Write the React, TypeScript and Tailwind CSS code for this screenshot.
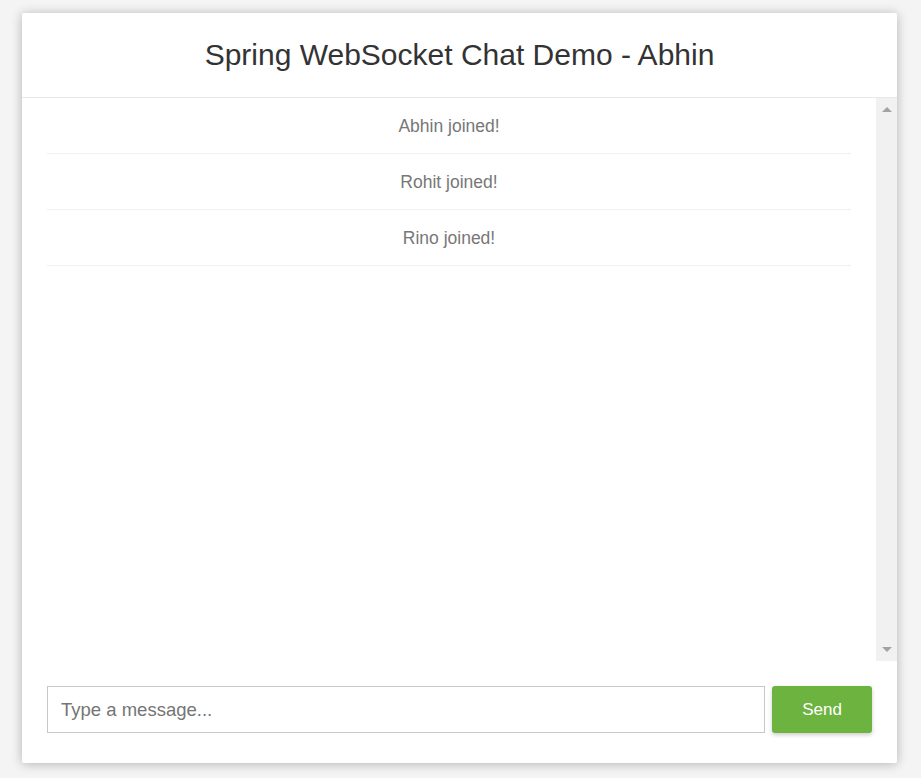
import React from "react";

export default function App() {
  const msgs = ["Abhin joined!", "Rohit joined!", "Rino joined!"];
  return (
    <div className="min-h-[778px] w-full bg-[#f4f4f4] pt-[13px] pl-[22px]" style={{ fontFamily: '"Liberation Sans", Arial, sans-serif' }}>
      <div className="w-[875px] h-[750px] bg-white rounded-[2px] shadow-[0_1px_11px_rgba(0,0,0,0.27)] flex flex-col">
        <div className="h-[85px] border-b border-[#e8e8e8] flex items-center justify-center">
          <h2 className="text-[30px] text-[#333] leading-none">Spring WebSocket Chat Demo - Abhin</h2>
        </div>
        <div className="h-[563px] flex">
          <ul className="flex-1 px-[25px]">
            {msgs.map((m) => (
              <li key={m} className="h-[56px] pt-[2px] border-b border-[#f0f0f0] flex items-center justify-center text-[17.5px] text-[#777]">
                {m}
              </li>
            ))}
          </ul>
          <div className="w-[21px] bg-[#f1f1f1] flex flex-col items-center justify-between py-[8px]">
            <div className="w-0 h-0 border-l-[5px] border-r-[5px] border-b-[5px] border-l-transparent border-r-transparent border-b-[#a3a3a3] mt-[1px]" />
            <div className="w-0 h-0 border-l-[5px] border-r-[5px] border-t-[5px] border-l-transparent border-r-transparent border-t-[#a3a3a3] mb-[1px]" />
          </div>
        </div>
        <div className="flex items-start gap-[7px] pl-[25px] pt-[25px]">
          <input
            type="text"
            placeholder="Type a message..."
            className="w-[718px] h-[47px] border border-[#c8c8c8] px-[13px] text-[18.5px] text-[#333] placeholder:text-[#757575] outline-none"
            style={{ fontFamily: '"Liberation Sans", Arial, sans-serif' }}
          />
          <button
            className="w-[100px] h-[47px] bg-[#6db33f] text-white text-[17px] rounded-[3px] shadow-[0_2px_4px_rgba(0,0,0,0.2)]"
            style={{ fontFamily: '"Liberation Sans", Arial, sans-serif' }}
          >
            Send
          </button>
        </div>
      </div>
    </div>
  );
}
